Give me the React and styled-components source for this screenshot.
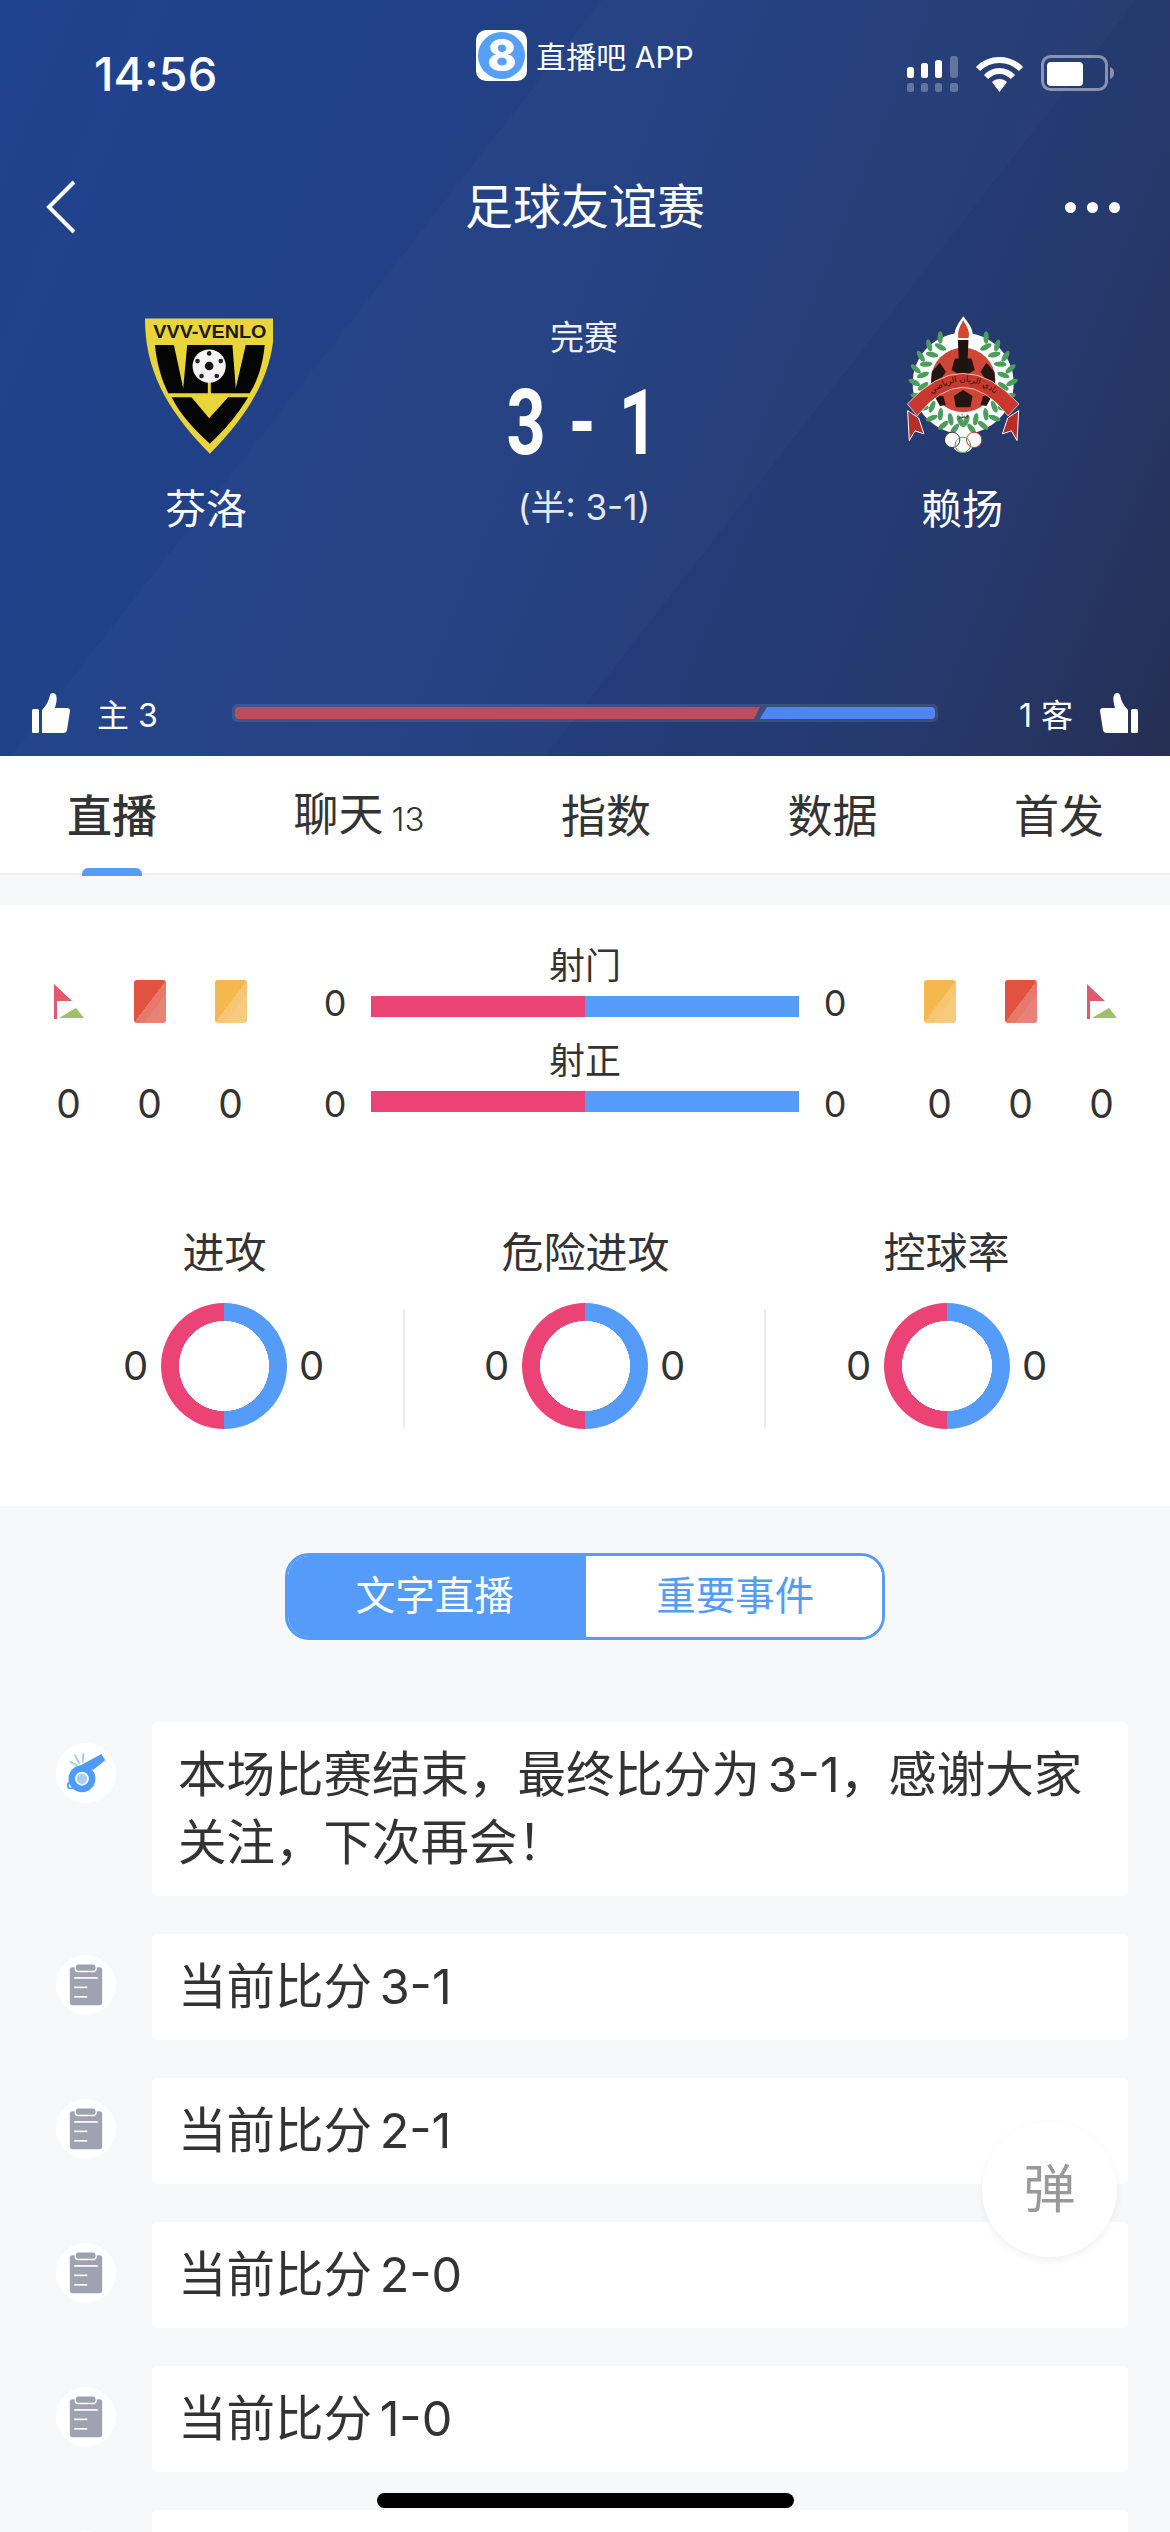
import React from 'react';
import styled, { createGlobalStyle } from 'styled-components';

const GlobalStyle = createGlobalStyle`
  html, body {
    margin: 0;
    padding: 0;
    background: #f7f8fa;
  }
  * {
    box-sizing: border-box;
  }
`

const Page = styled.div`
  position: relative;
  width: 1170px;
  height: 2532px;
  overflow: hidden;
  background: #f7f8fa;
  color: #333;
  font-family: Inter, "Noto Sans CJK SC", sans-serif;
`

/* header */

const Hero = styled.header`
  height: 756px;
  color: #fff;
  background:
    linear-gradient(128deg, transparent 34.2%, rgba(255, 255, 255, 0.014) 34.2%, rgba(255, 255, 255, 0.014) 64.5%, transparent 64.5%),
    linear-gradient(112deg, #20438f 0%, #233f80 50%, #25396c 82%, #262f54 100%);
`

const StatusBar = styled.div`
  display: grid;
  grid-template-columns: 1fr auto 1fr;
  height: 100px;
`

const Clock = styled.div`
  padding: 48px 0 0 94px;
  font-size: 47px;
  line-height: 52px;
  font-weight: 500;
`

const AppBadge = styled.div`
  display: flex;
  align-items: flex-start;
  gap: 9px;
  padding-top: 30px;
  font-size: 30px;
  line-height: 54px;
`

const AppLogo = styled.div`
  display: flex;
  align-items: center;
  justify-content: center;
  width: 51px;
  height: 51px;
  border-radius: 10px;
  background: #fff;
`

const AppLogoRound = styled.div`
  width: 47px;
  height: 47px;
  border-radius: 50%;
  background: #55a0fb;
  color: #fff;
  text-align: center;
  font-size: 44px;
  line-height: 47px;
  font-weight: 800;
`

const StatusIcons = styled.div`
  display: flex;
  justify-content: flex-end;
  align-items: flex-start;
  gap: 17px;
  padding: 55px 55px 0 0;
`

const NavBar = styled.div`
  display: grid;
  grid-template-columns: 1fr auto 1fr;
  align-items: center;
  height: 70px;
  margin: 72px 0 73px;
  padding: 0 50px;
`

const BackIcon = styled.svg`
  margin-left: -5px;
`

const NavTitle = styled.div`
  font-size: 48px;
  line-height: 70px;
`

const NavMore = styled.div`
  display: flex;
  justify-content: flex-end;
  gap: 11px;
`

const Dot = styled.span`
  width: 11px;
  height: 11px;
  border-radius: 50%;
  background: #fff;
`

const Match = styled.div`
  display: grid;
  grid-template-columns: repeat(3, 378px);
  padding-left: 17px;
  height: 378px;
`

const Team = styled.div`
  display: flex;
  flex-direction: column;
  align-items: center;
`

const TeamName = styled.div`
  margin-top: 24px;
  font-size: 41px;
  line-height: 60px;
`

const Result = styled.div`
  display: flex;
  flex-direction: column;
  align-items: center;
`

const ResultState = styled.div`
  font-size: 34px;
  line-height: 45px;
  opacity: 0.92;
`

const Score = styled.div`
  margin-top: 19px;
  font-family: Roboto, sans-serif;
  font-size: 90px;
  line-height: 90px;
  font-weight: 700;
  white-space: pre;
  letter-spacing: 4px;
  transform: scaleX(0.76);
`

const HalfScore = styled.div`
  margin-top: 16px;
  font-size: 35px;
  line-height: 44px;
  opacity: 0.88;
`

const LikeRow = styled.div`
  display: flex;
  align-items: center;
  height: 40px;
  padding: 0 32px;
`

const LikeSide = styled.div`
  display: flex;
  align-items: center;
  justify-content: ${p => (p.$away ? 'flex-end' : 'flex-start')};
  gap: 27px;
  width: 200px;
  font-size: 32px;
`

const ThumbIcon = styled.svg`
  width: 38px;
  height: 40px;
  transform: ${p => (p.$flip ? 'scaleX(-1)' : 'none')};
`

const LikeBar = styled.div`
  display: flex;
  flex: 1;
  height: 18px;
  padding: 3px;
  border-radius: 5px;
  background: rgba(255, 255, 255, 0.1);
`

const LikeHome = styled.div`
  flex: 3;
  border-radius: 4px 0 0 4px;
  background: #b94f5c;
  clip-path: polygon(0 0, 100% 0, calc(100% - 6px) 100%, 0 100%);
`

const LikeAway = styled.div`
  flex: 1;
  border-radius: 0 4px 4px 0;
  background: #4f85f5;
  clip-path: polygon(7px 0, 100% 0, 100% 100%, 0 100%);
`

/* tabs */

const Tabs = styled.nav`
  display: flex;
  justify-content: space-between;
  align-items: center;
  height: 119px;
  padding: 4px 66px 0 67px;
  background: #fff;
  border-bottom: 2px solid #efefef;
`

const Tab = styled.div`
  position: relative;
  display: flex;
  align-items: baseline;
  gap: 8px;
  font-size: 45px;
  line-height: 60px;
  font-weight: ${p => (p.$active ? 500 : 400)};
  color: #333;

  ${p => p.$active && `
    &::after {
      content: '';
      position: absolute;
      left: 15px;
      bottom: -29px;
      width: 60px;
      height: 8px;
      border-radius: 6px 6px 0 0;
      background: #549cf8;
    }
  `}
`

const TabCount = styled.span`
  font-size: 33px;
  font-weight: 300;
`

/* stats panel */

const StatsPanel = styled.section`
  margin-top: 30px;
  padding: 39px 28px 77px;
  background: #fff;
`

const StatsTop = styled.div`
  display: grid;
  grid-template-columns: 243px 1fr 243px;
`

const SideGrid = styled.div`
  display: grid;
  grid-template-columns: repeat(3, 81px);
  grid-template-rows: 43px 44px;
  row-gap: 59px;
  justify-items: center;
  align-items: center;
  padding-top: 36px;
`

const CountText = styled.div`
  font-size: 39px;
  line-height: 44px;
  color: #333;
`

const PlayCard = styled.div`
  width: 32px;
  height: 43px;
  border-radius: 3px;
  background:
    linear-gradient(127deg, transparent 66%, rgba(255, 255, 255, 0.08) 66%),
    linear-gradient(127deg, ${p => p.$color} 50%, ${p => p.$light} 50%);
`

const FlagIcon = styled.svg`
  width: 30px;
  height: 35px;
`

const BarGroup = styled.div`
  & + & {
    margin-top: 22px;
  }
`

const BarLabel = styled.div`
  text-align: center;
  font-size: 36px;
  line-height: 44px;
`

const BarRow = styled.div`
  display: flex;
  justify-content: center;
  align-items: center;
  height: 21px;
  margin-top: 8px;
`

const BarValue = styled.div`
  width: 72px;
  text-align: center;
  font-size: 36px;
  line-height: 44px;
  transform: translateY(${p => p.$shift}px);
`

const CompareBar = styled.div`
  display: flex;
  width: 428px;
  height: 21px;
`

const BarPart = styled.div`
  flex: 1;
  background: ${p => p.$color};
`

const RingGrid = styled.div`
  display: grid;
  grid-template-columns: repeat(3, 361px);
  margin: 102px 0 0 16px;
`

const RingCol = styled.div`
  display: flex;
  flex-direction: column;
`

const RingTitle = styled.div`
  text-align: center;
  font-size: 42px;
  line-height: 50px;
`

const RingBody = styled.div`
  display: flex;
  justify-content: center;
  align-items: flex-end;
  height: 120px;
  margin-top: 31px;
  border-right: ${p => (p.$divider ? '2px solid #eee' : '0')};
`

const RingValue = styled.div`
  width: 50px;
  flex-shrink: 0;
  text-align: center;
  font-size: 40px;
  line-height: 126px;
`

const Ring = styled.div`
  flex-shrink: 0;
  width: 126px;
  height: 126px;
  border-radius: 50%;
  background:
    radial-gradient(closest-side, #fff 71.2%, transparent 71.8%),
    conic-gradient(#549cf8 0 50%, #ec4377 0 100%);
`

/* live feed */

const Switcher = styled.div`
  display: flex;
  width: 600px;
  height: 87px;
  margin: 47px auto 0;
  border: 3px solid #549cf8;
  border-radius: 24px;
  overflow: hidden;
`

const SwitchItem = styled.div`
  flex: 1;
  padding: ${p => (p.$active ? '0 4px 0 0' : '0 0 0 3px')};
  text-align: center;
  font-size: 39.500px;
  line-height: 81px;
  color: ${p => (p.$active ? '#fff' : '#549cf8')};
  background: ${p => (p.$active ? '#549cf8' : '#fff')};
`

const Feed = styled.div`
  display: flex;
  flex-direction: column;
  gap: 38px;
  margin-top: 82px;
  padding: 0 42px 0 56px;
`

const FeedRow = styled.div`
  display: flex;
  align-items: flex-start;
  gap: 36px;
`

const FeedIcon = styled.div`
  flex-shrink: 0;
  width: 60px;
  height: 60px;
  margin-top: 21px;
  border-radius: 50%;
  background: #fff;
`

const FeedIconSvg = styled.svg`
  display: block;
  width: 60px;
  height: 60px;
`

const FeedCard = styled.div`
  flex: 1;
  min-height: 106px;
  padding: 19px 26px;
  border-radius: 5px;
  background: #fff;
  font-size: 48.500px;
  line-height: 68px;
  word-spacing: -6px;
  color: #333;
`

const DanmuButton = styled.div`
  position: absolute;
  left: 982px;
  top: 2122px;
  width: 135px;
  height: 135px;
  border-radius: 50%;
  background: #fff;
  box-shadow: 0 3px 8px rgba(0, 0, 0, 0.06);
  text-align: center;
  font-size: 52px;
  line-height: 135px;
  color: #999;
`

const HomeIndicator = styled.div`
  position: absolute;
  left: 377px;
  top: 2493px;
  width: 417px;
  height: 15px;
  border-radius: 8px;
  background: #000;
`

const SignalIcon = () => (
  <svg width="51" height="37" viewBox="0 0 51 37">
    <g fill="#fff">
      <rect x="0" y="12" width="7" height="11" rx="2.5" />
      <rect x="14" y="8" width="7" height="15" rx="2.5" />
      <rect x="28" y="5" width="7" height="18" rx="2.5" />
    </g>
    <g fill="#fff" fillOpacity="0.28">
      <rect x="43" y="1" width="8" height="22" rx="3" />
      <rect x="0" y="28" width="7" height="9" rx="2.5" />
      <rect x="14" y="28" width="7" height="9" rx="2.5" />
      <rect x="28" y="28" width="7" height="9" rx="2.5" />
      <rect x="43" y="28" width="8" height="9" rx="2.5" />
    </g>
  </svg>
)

const WifiIcon = () => (
  <svg width="49" height="37" viewBox="0 0 49 37">
    <g fill="none" stroke="#fff" strokeWidth="6">
      <path d="M3 14 C15 2 34 2 46 14" />
      <path d="M11 22 C19 14 30 14 38 22" />
    </g>
    <path d="M17 27 C21 23 28 23 32 27 L24.500 37Z" fill="#fff" />
  </svg>
)

const BatteryIcon = () => (
  <svg width="74" height="36" viewBox="0 0 74 36">
    <rect x="1.500" y="1.500" width="64" height="33" rx="8" fill="none" stroke="#fff" strokeOpacity="0.45" strokeWidth="3" />
    <rect x="6" y="7" width="36" height="24" rx="4" fill="#fff" />
    <path d="M69 12 C72 13 73 15 73 18 C73 21 72 23 69 24Z" fill="#fff" fillOpacity="0.45" />
  </svg>
)

const ThumbUp = ({ flip }) => (
  <ThumbIcon $flip={flip} viewBox="0 0 38 40">
    <rect x="0" y="16" width="7" height="24" rx="1.500" fill="#fff" />
    <path d="M10 17 C14 13 17 8 18 2 C19 -1 24 -1 24.500 4 C25 8 24 11 23 15 L35 15 Q38 15 38 18 L35 37 Q34.500 40 31 40 L10 40Z" fill="#fff" />
  </ThumbIcon>
)

const VenloLogo = () => (
  <svg width="133" height="140" viewBox="120 75 400 420">
    <path d="M135 85 H525 C525 230 470 350 330 492 C190 350 135 230 135 85Z" fill="#e9d53a" />
    <text x="160" y="145" textLength="340" lengthAdjust="spacingAndGlyphs" fontFamily="Liberation Sans, sans-serif" fontSize="58" fontWeight="700" fill="#1c1a0c">VVV-VENLO</text>
    <path d="M165 165 H495 C490 220 475 270 450 310 H205 C185 270 170 220 165 165Z" fill="#050505" />
    <path d="M222 165 H262 L250 295Z M398 165 H438 L408 295Z M324 265 H333 V312 H324Z" fill="#e9d53a" />
    <path d="M215 322 H275 L328 385 L385 322 H445 C410 380 375 420 330 462 C285 420 245 380 215 322Z" fill="#050505" />
    <circle cx="328" cy="228" r="50" fill="#f4f4f4" />
    <circle cx="328" cy="228" r="13" fill="#111" />
    <g fill="#222">
      <circle cx="328" cy="190" r="7" />
      <circle cx="293" cy="213" r="7" />
      <circle cx="363" cy="213" r="7" />
      <circle cx="305" cy="258" r="7" />
      <circle cx="351" cy="258" r="7" />
    </g>
  </svg>
)

// laurel leaves, degrees from the top of the wreath
const leafSteps = [28, 44, 60, 76, 92, 108, 124, 140, 156, 170]

const Leaf = ({ deg, radius, tilt, side }) => {
  const rad = (deg * Math.PI) / 180
  const cx = 310 + side * radius * Math.sin(rad)
  const cy = 272 - radius * Math.cos(rad)
  return (
    <ellipse cx={cx} cy={cy} rx="19" ry="8" fill="#4c9e5c" transform={`rotate(${side * (deg - 90 + tilt)} ${cx} ${cy})`} />
  )
}

const RayyanLogo = () => (
  <svg width="133" height="140" viewBox="108 75 400 420">
    <circle cx="310" cy="280" r="152" fill="#fff" />
    {leafSteps.map(deg => (
      <g key={deg}>
        <Leaf deg={deg} radius={147} tilt={-28} side={-1} />
        <Leaf deg={deg} radius={147} tilt={-28} side={1} />
        <Leaf deg={deg + 6} radius={122} tilt={28} side={-1} />
        <Leaf deg={deg + 6} radius={122} tilt={28} side={1} />
      </g>
    ))}
    <circle cx="310" cy="270" r="97" fill="#cf4537" />
    <g fill="#241510">
      <path d="M285 205 L335 205 L345 240 L310 262 L275 240Z" />
      <path d="M216 245 L240 218 L258 245 L240 272 L214 280Z" />
      <path d="M404 245 L380 218 L362 245 L380 272 L406 280Z" />
      <path d="M310 300 L338 318 L332 352 L288 352 L282 318Z" />
      <path d="M222 315 L250 318 L258 345 L240 348Z" />
      <path d="M398 315 L370 318 L362 345 L380 348Z" />
    </g>
    <path d="M310 78 C292 105 280 120 285 150 L337 150 C345 120 328 100 310 78Z" fill="#fff" />
    <path d="M310 90 C300 110 292 122 296 144 L326 144 C332 122 320 108 310 90Z" fill="#d8452f" />
    <path d="M294 150 H326 L322 240 H298Z" fill="#1d1410" />
    <path d="M143 362 L176 384 L192 432 L165 423 L148 452Z" fill="#b52f27" stroke="#fff" strokeWidth="3" />
    <path d="M477 362 L444 384 L428 432 L455 423 L472 452Z" fill="#b52f27" stroke="#fff" strokeWidth="3" />
    <path d="M142 342 Q310 158 478 342 L445 378 Q310 206 172 378Z" fill="#c9382e" stroke="#fff" strokeWidth="2" />
    <path id="rayyan-band" d="M162 364 Q310 186 458 364" fill="none" />
    <text fontFamily="DejaVu Sans, sans-serif" fontSize="25" fill="#2a0d08">
      <textPath href="#rayyan-band" startOffset="50%" textAnchor="middle">نادي الريان الرياضي</textPath>
    </text>
    <text x="310" y="384" textAnchor="middle" fontFamily="DejaVu Sans, sans-serif" fontSize="18" fill="#333">قطر</text>
    <circle cx="309" cy="455" r="34" fill="#fff" />
    <circle cx="277" cy="450" r="23" fill="#fff" stroke="#333" strokeWidth="3" />
    <circle cx="343" cy="450" r="23" fill="#fff" stroke="#c8382e" strokeWidth="3" />
    <circle cx="309" cy="465" r="23" fill="none" stroke="#4c9e5c" strokeWidth="3" />
  </svg>
)

const CornerFlag = () => (
  <FlagIcon viewBox="0 0 30 35">
    <path d="M0 0 L18 17 H3 V35 H0Z" fill="#e05a6c" />
    <path d="M5 34 L22 24 L30 34Z" fill="#9bc26a" />
  </FlagIcon>
)

const RedCard = () => <PlayCard $color="#e25241" $light="#e8786b" />
const YellowCard = () => <PlayCard $color="#f4b84f" $light="#f6c672" />

const WhistleIcon = () => (
  <FeedIconSvg viewBox="79 69 178 178">
    <g stroke="#a9cefc" strokeWidth="6" strokeLinecap="round">
      <path d="M122 125 L140 135" />
      <path d="M135 105 L148 128" />
      <path d="M160 102 L158 125" />
    </g>
    <path d="M148 137 L214 102 L225 120 L190 148 Z" fill="#4f9bfb" />
    <circle cx="123" cy="195" r="9" fill="#fff" stroke="#4f9bfb" strokeWidth="5" />
    <circle cx="156" cy="175" r="40" fill="#4f9bfb" />
    <circle cx="156" cy="175" r="18" fill="#a9cefc" stroke="#fff" strokeWidth="5" />
  </FeedIconSvg>
)

const ClipboardIcon = () => (
  <FeedIconSvg viewBox="79 709 178 178">
    <rect x="120" y="745" width="96" height="113" rx="8" fill="#9ea2b1" />
    <rect x="136" y="735" width="62" height="23" rx="9" fill="#9ea2b1" stroke="#fff" strokeWidth="4" />
    <g stroke="#fff" strokeWidth="5">
      <path d="M133 777 H203" />
      <path d="M133 805 H172" />
      <path d="M133 833 H172" />
    </g>
  </FeedIconSvg>
)

const tabs = [
  { name: '直播', active: true },
  { name: '聊天', count: 13 },
  { name: '指数' },
  { name: '数据' },
  { name: '首发' },
]

const bars = [
  { label: '射门', shift: -4 },
  { label: '射正', shift: 2 },
]

const rings = ['进攻', '危险进攻', '控球率']

const feed = [
  { text: '本场比赛结束，最终比分为 3-1，感谢大家关注，下次再会！', icon: 'whistle' },
  { text: '当前比分 3-1' },
  { text: '当前比分 2-1' },
  { text: '当前比分 2-0' },
  { text: '当前比分 1-0' },
  { text: '' },
]

export default function App() {
  return (
    <Page>
      <GlobalStyle />
      <Hero>
        <StatusBar>
          <Clock>14:56</Clock>
          <AppBadge>
            <AppLogo>
              <AppLogoRound>8</AppLogoRound>
            </AppLogo>
            直播吧 APP
          </AppBadge>
          <StatusIcons>
            <SignalIcon />
            <WifiIcon />
            <BatteryIcon />
          </StatusIcons>
        </StatusBar>
        <NavBar>
          <BackIcon width="32" height="54" viewBox="0 0 32 54">
            <path d="M29 2 L4 27 L29 52" fill="none" stroke="#fff" strokeWidth="4" />
          </BackIcon>
          <NavTitle>足球友谊赛</NavTitle>
          <NavMore>
            <Dot />
            <Dot />
            <Dot />
          </NavMore>
        </NavBar>
        <Match>
          <Team>
            <VenloLogo />
            <TeamName>芬洛</TeamName>
          </Team>
          <Result>
            <ResultState>完赛</ResultState>
            <Score>3 - 1</Score>
            <HalfScore>(半: 3-1)</HalfScore>
          </Result>
          <Team>
            <RayyanLogo />
            <TeamName>赖扬</TeamName>
          </Team>
        </Match>
        <LikeRow>
          <LikeSide>
            <ThumbUp />
            主 3
          </LikeSide>
          <LikeBar>
            <LikeHome />
            <LikeAway />
          </LikeBar>
          <LikeSide $away>
            1 客
            <ThumbUp flip />
          </LikeSide>
        </LikeRow>
      </Hero>

      <Tabs>
        {tabs.map(tab => (
          <Tab key={tab.name} $active={tab.active}>
            {tab.name}
            {tab.count && <TabCount>{tab.count}</TabCount>}
          </Tab>
        ))}
      </Tabs>

      <StatsPanel>
        <StatsTop>
          <SideGrid>
            <CornerFlag />
            <RedCard />
            <YellowCard />
            <CountText>0</CountText>
            <CountText>0</CountText>
            <CountText>0</CountText>
          </SideGrid>
          <div>
            {bars.map(bar => (
              <BarGroup key={bar.label}>
                <BarLabel>{bar.label}</BarLabel>
                <BarRow>
                  <BarValue $shift={bar.shift}>0</BarValue>
                  <CompareBar>
                    <BarPart $color="#ec4377" />
                    <BarPart $color="#549cf8" />
                  </CompareBar>
                  <BarValue $shift={bar.shift}>0</BarValue>
                </BarRow>
              </BarGroup>
            ))}
          </div>
          <SideGrid>
            <YellowCard />
            <RedCard />
            <CornerFlag />
            <CountText>0</CountText>
            <CountText>0</CountText>
            <CountText>0</CountText>
          </SideGrid>
        </StatsTop>
        <RingGrid>
          {rings.map((title, i) => (
            <RingCol key={title}>
              <RingTitle>{title}</RingTitle>
              <RingBody $divider={i < 2}>
                <RingValue>0</RingValue>
                <Ring />
                <RingValue>0</RingValue>
              </RingBody>
            </RingCol>
          ))}
        </RingGrid>
      </StatsPanel>

      <Switcher>
        <SwitchItem $active>文字直播</SwitchItem>
        <SwitchItem>重要事件</SwitchItem>
      </Switcher>

      <Feed>
        {feed.map((item, index) => (
          <FeedRow key={index}>
            <FeedIcon>{item.icon === 'whistle' ? <WhistleIcon /> : <ClipboardIcon />}</FeedIcon>
            <FeedCard>{item.text}</FeedCard>
          </FeedRow>
        ))}
      </Feed>

      <DanmuButton>弹</DanmuButton>
      <HomeIndicator />
    </Page>
  );
}
